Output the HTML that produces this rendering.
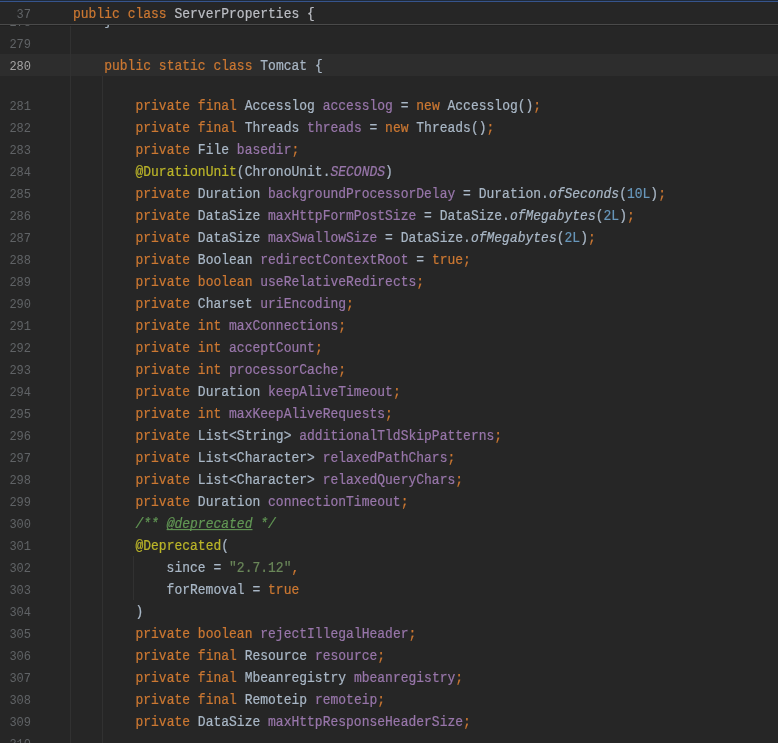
<!DOCTYPE html><html><head><meta charset="utf-8"><style>
html,body{margin:0;padding:0;}
body{-webkit-font-smoothing:antialiased;width:778px;height:743px;overflow:hidden;background:#262626;position:relative;font-family:"Liberation Mono",monospace;}
.l{position:absolute;left:72.6px;will-change:transform;transform:scaleY(1.1);transform-origin:0 14.46px;height:22px;line-height:22px;font-size:13px;letter-spacing:0px;white-space:pre;color:#BCBEC4;-webkit-text-stroke:0.2px currentColor;}
.ln{position:absolute;left:0;will-change:transform;width:31px;text-align:right;height:22px;line-height:22px;font-size:12px;letter-spacing:0px;white-space:pre;color:#606366;}
.d{color:#A9B7C6}.k{color:#CC7832}.f{color:#9876AA}.n{color:#6897BB}.s{color:#6A8759}.a{color:#BBB529}.c{color:#629755;font-style:italic}
.t{color:#629755;font-style:italic;text-decoration:underline;text-decoration-skip-ink:none;text-underline-offset:1px}
.fi{color:#9876AA;font-style:italic}.mi{color:#A9B7C6;font-style:italic}
.g{position:absolute;width:1px;background:#313131}
</style></head><body>

<div style="position:absolute;left:0;top:54px;width:778px;height:22px;background:#2D2D2D"></div>
<div class="g" style="left:70px;top:25px;height:718px"></div>
<div class="g" style="left:102px;top:76px;height:667px"></div>
<div class="g" style="left:133px;top:556px;height:44px"></div>
<div class="ln" style="top:33.5px;">279</div>
<div class="l" style="top:33.5px"></div>
<div class="ln" style="top:55.5px;color:#A4A3A3;">280</div>
<div class="l" style="top:55.5px"><span class="d">    </span><span class="k">public</span><span class="d"> </span><span class="k">static</span><span class="d"> </span><span class="k">class</span><span class="d"> Tomcat {</span></div>
<div class="ln" style="top:95.5px;">281</div>
<div class="l" style="top:95.5px"><span class="d">        </span><span class="k">private</span><span class="d"> </span><span class="k">final</span><span class="d"> Accesslog </span><span class="f">accesslog</span><span class="d"> = </span><span class="k">new</span><span class="d"> Accesslog()</span><span class="k">;</span></div>
<div class="ln" style="top:117.5px;">282</div>
<div class="l" style="top:117.5px"><span class="d">        </span><span class="k">private</span><span class="d"> </span><span class="k">final</span><span class="d"> Threads </span><span class="f">threads</span><span class="d"> = </span><span class="k">new</span><span class="d"> Threads()</span><span class="k">;</span></div>
<div class="ln" style="top:139.5px;">283</div>
<div class="l" style="top:139.5px"><span class="d">        </span><span class="k">private</span><span class="d"> File </span><span class="f">basedir</span><span class="k">;</span></div>
<div class="ln" style="top:161.5px;">284</div>
<div class="l" style="top:161.5px"><span class="d">        </span><span class="a">@DurationUnit</span><span class="d">(ChronoUnit.</span><span class="fi">SECONDS</span><span class="d">)</span></div>
<div class="ln" style="top:183.5px;">285</div>
<div class="l" style="top:183.5px"><span class="d">        </span><span class="k">private</span><span class="d"> Duration </span><span class="f">backgroundProcessorDelay</span><span class="d"> = Duration.</span><span class="mi">ofSeconds</span><span class="d">(</span><span class="n">10L</span><span class="d">)</span><span class="k">;</span></div>
<div class="ln" style="top:205.5px;">286</div>
<div class="l" style="top:205.5px"><span class="d">        </span><span class="k">private</span><span class="d"> DataSize </span><span class="f">maxHttpFormPostSize</span><span class="d"> = DataSize.</span><span class="mi">ofMegabytes</span><span class="d">(</span><span class="n">2L</span><span class="d">)</span><span class="k">;</span></div>
<div class="ln" style="top:227.5px;">287</div>
<div class="l" style="top:227.5px"><span class="d">        </span><span class="k">private</span><span class="d"> DataSize </span><span class="f">maxSwallowSize</span><span class="d"> = DataSize.</span><span class="mi">ofMegabytes</span><span class="d">(</span><span class="n">2L</span><span class="d">)</span><span class="k">;</span></div>
<div class="ln" style="top:249.5px;">288</div>
<div class="l" style="top:249.5px"><span class="d">        </span><span class="k">private</span><span class="d"> Boolean </span><span class="f">redirectContextRoot</span><span class="d"> = </span><span class="k">true</span><span class="k">;</span></div>
<div class="ln" style="top:271.5px;">289</div>
<div class="l" style="top:271.5px"><span class="d">        </span><span class="k">private</span><span class="d"> </span><span class="k">boolean</span><span class="d"> </span><span class="f">useRelativeRedirects</span><span class="k">;</span></div>
<div class="ln" style="top:293.5px;">290</div>
<div class="l" style="top:293.5px"><span class="d">        </span><span class="k">private</span><span class="d"> Charset </span><span class="f">uriEncoding</span><span class="k">;</span></div>
<div class="ln" style="top:315.5px;">291</div>
<div class="l" style="top:315.5px"><span class="d">        </span><span class="k">private</span><span class="d"> </span><span class="k">int</span><span class="d"> </span><span class="f">maxConnections</span><span class="k">;</span></div>
<div class="ln" style="top:337.5px;">292</div>
<div class="l" style="top:337.5px"><span class="d">        </span><span class="k">private</span><span class="d"> </span><span class="k">int</span><span class="d"> </span><span class="f">acceptCount</span><span class="k">;</span></div>
<div class="ln" style="top:359.5px;">293</div>
<div class="l" style="top:359.5px"><span class="d">        </span><span class="k">private</span><span class="d"> </span><span class="k">int</span><span class="d"> </span><span class="f">processorCache</span><span class="k">;</span></div>
<div class="ln" style="top:381.5px;">294</div>
<div class="l" style="top:381.5px"><span class="d">        </span><span class="k">private</span><span class="d"> Duration </span><span class="f">keepAliveTimeout</span><span class="k">;</span></div>
<div class="ln" style="top:403.5px;">295</div>
<div class="l" style="top:403.5px"><span class="d">        </span><span class="k">private</span><span class="d"> </span><span class="k">int</span><span class="d"> </span><span class="f">maxKeepAliveRequests</span><span class="k">;</span></div>
<div class="ln" style="top:425.5px;">296</div>
<div class="l" style="top:425.5px"><span class="d">        </span><span class="k">private</span><span class="d"> List&lt;String&gt; </span><span class="f">additionalTldSkipPatterns</span><span class="k">;</span></div>
<div class="ln" style="top:447.5px;">297</div>
<div class="l" style="top:447.5px"><span class="d">        </span><span class="k">private</span><span class="d"> List&lt;Character&gt; </span><span class="f">relaxedPathChars</span><span class="k">;</span></div>
<div class="ln" style="top:469.5px;">298</div>
<div class="l" style="top:469.5px"><span class="d">        </span><span class="k">private</span><span class="d"> List&lt;Character&gt; </span><span class="f">relaxedQueryChars</span><span class="k">;</span></div>
<div class="ln" style="top:491.5px;">299</div>
<div class="l" style="top:491.5px"><span class="d">        </span><span class="k">private</span><span class="d"> Duration </span><span class="f">connectionTimeout</span><span class="k">;</span></div>
<div class="ln" style="top:513.5px;">300</div>
<div class="l" style="top:513.5px"><span class="d">        </span><span class="c">/** </span><span class="t">@deprecated</span><span class="c"> */</span></div>
<div class="ln" style="top:535.5px;">301</div>
<div class="l" style="top:535.5px"><span class="d">        </span><span class="a">@Deprecated</span><span class="d">(</span></div>
<div class="ln" style="top:557.5px;">302</div>
<div class="l" style="top:557.5px"><span class="d">            since = </span><span class="s">&quot;2.7.12&quot;</span><span class="k">,</span></div>
<div class="ln" style="top:579.5px;">303</div>
<div class="l" style="top:579.5px"><span class="d">            forRemoval = </span><span class="k">true</span></div>
<div class="ln" style="top:601.5px;">304</div>
<div class="l" style="top:601.5px"><span class="d">        )</span></div>
<div class="ln" style="top:623.5px;">305</div>
<div class="l" style="top:623.5px"><span class="d">        </span><span class="k">private</span><span class="d"> </span><span class="k">boolean</span><span class="d"> </span><span class="f">rejectIllegalHeader</span><span class="k">;</span></div>
<div class="ln" style="top:645.5px;">306</div>
<div class="l" style="top:645.5px"><span class="d">        </span><span class="k">private</span><span class="d"> </span><span class="k">final</span><span class="d"> Resource </span><span class="f">resource</span><span class="k">;</span></div>
<div class="ln" style="top:667.5px;">307</div>
<div class="l" style="top:667.5px"><span class="d">        </span><span class="k">private</span><span class="d"> </span><span class="k">final</span><span class="d"> Mbeanregistry </span><span class="f">mbeanregistry</span><span class="k">;</span></div>
<div class="ln" style="top:689.5px;">308</div>
<div class="l" style="top:689.5px"><span class="d">        </span><span class="k">private</span><span class="d"> </span><span class="k">final</span><span class="d"> Remoteip </span><span class="f">remoteip</span><span class="k">;</span></div>
<div class="ln" style="top:711.5px;">309</div>
<div class="l" style="top:711.5px"><span class="d">        </span><span class="k">private</span><span class="d"> DataSize </span><span class="f">maxHttpResponseHeaderSize</span><span class="k">;</span></div>
<div class="ln" style="top:733.5px;">310</div>
<div class="l" style="top:733.5px"></div>
<div style="position:absolute;left:0;top:0;width:778px;height:24px;background:#262626"></div>
<div style="position:absolute;left:0;top:0;width:778px;height:1px;background:#1F2A3A"></div>
<div style="position:absolute;left:0;top:1px;width:778px;height:1px;background:#36548C"></div>
<div style="position:absolute;left:0;top:24px;width:778px;height:1px;background:#4A4A4A"></div>
<div class="ln" style="top:3.5px">37</div>
<div class="l" style="top:3.5px"><span class="k">public</span> <span class="k">class</span> ServerProperties {</div>
<div style="position:absolute;left:0;top:25px;width:778px;height:1px;background:#202020"></div>
<div style="position:absolute;left:0;top:25px;width:778px;height:10px;overflow:hidden">
<div class="ln" style="top:-13.5px">278</div>
<div class="l" style="top:-14.5px"><span class="d">    </span><span class="d">}</span></div>
</div>
</body></html>
